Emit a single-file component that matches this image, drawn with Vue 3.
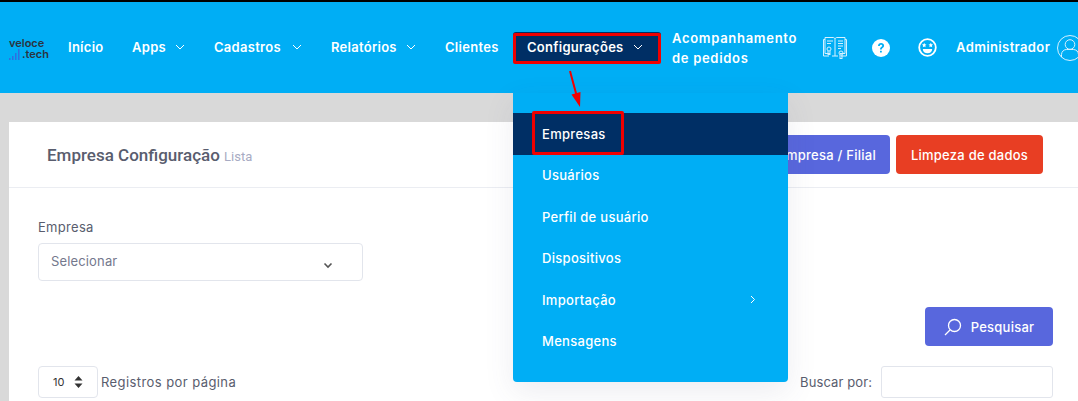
<template>
  <div class="page">
    <header class="topbar">
      <div class="logo">
        <svg class="logo-bars" width="13" height="11" viewBox="0 0 13 11">
          <rect x="0" y="9" width="1.5" height="2" fill="#2f6fe0" />
          <rect x="3" y="7" width="1.5" height="4" fill="#2f6fe0" />
          <rect x="6" y="4" width="1.5" height="7" fill="#2f6fe0" />
          <rect x="9" y="0" width="1.5" height="11" fill="#2f6fe0" />
        </svg>
        <span class="logo-a">veloce</span>
        <span class="logo-b">.tech</span>
      </div>

      <nav class="nav">
        <a class="nav-item inicio">Início</a>
        <a class="nav-item apps">Apps<svg class="chev" viewBox="0 0 10 6"><path d="M1 1l4 4 4-4" /></svg></a>
        <a class="nav-item cad">Cadastros<svg class="chev" viewBox="0 0 10 6"><path d="M1 1l4 4 4-4" /></svg></a>
        <a class="nav-item rel">Relatórios<svg class="chev" viewBox="0 0 10 6"><path d="M1 1l4 4 4-4" /></svg></a>
        <a class="nav-item cli">Clientes</a>
        <a class="nav-item conf">Configurações<svg class="chev" viewBox="0 0 10 6"><path d="M1 1l4 4 4-4" /></svg></a>
        <a class="nav-item acomp">Acompanhamento<br />de pedidos</a>
      </nav>

      <div class="tools">
        <svg class="book" width="26" height="24" viewBox="0 0 26 24" fill="none" stroke="#d6f1ff" stroke-width="1">
          <path d="M7 20H1.500V3.500H3M19 20h5.500V3.500H23" />
          <path d="M3 1.500h8c1 0 2 .5 2 1.500 0-1 1-1.500 2-1.500h8v16h-5M8 17.500H3v-16M13 3v17M10 20h6" />
          <path d="M5 5h6M5 7.500h4M16 5h5M16 7.500h5M16 10h5M16 12.500h3" />
          <circle cx="7" cy="13" r="2" />
          <path d="M6 15v4l1-1 1 1v-4" />
          <circle cx="19" cy="17" r="2" />
          <path d="M18 19v4l1-1 1 1v-4" />
        </svg>
        <svg class="help" width="18" height="18" viewBox="0 0 18 18">
          <circle cx="9" cy="9" r="9" fill="#fff" />
          <path d="M6 7c0-2 1.300-3 3.100-3 1.700 0 3 1 3 2.700 0 2.200-2.400 2.200-2.400 3.800H8c0-2.600 2.200-2.600 2.200-3.800 0-.6-.5-1-1.100-1-.7 0-1.200.5-1.300 1.300z" fill="#00aef5" />
          <rect x="8" y="11.700" width="1.800" height="1.900" rx=".4" fill="#00aef5" />
        </svg>
        <svg class="smile" width="19" height="19" viewBox="0 0 19 19">
          <circle cx="9.500" cy="9.500" r="8.300" fill="none" stroke="#fff" stroke-width="1.800" />
          <path d="M6.200 4.800l.7 1.500 1.600.2-1.200 1.100.3 1.600-1.400-.8-1.400.8.300-1.600-1.200-1.100 1.600-.2zM12.800 4.800l.7 1.500 1.600.2-1.200 1.100.3 1.600-1.400-.8-1.400.8.300-1.600-1.200-1.100 1.600-.2z" fill="#fff" />
          <path d="M4.800 11h9.400c0 2.700-2 4.300-4.700 4.300S4.800 13.700 4.800 11z" fill="#fff" />
        </svg>
        <span class="admin">Administrador</span>
        <svg class="user" width="26" height="26" viewBox="0 0 26 26" fill="none" stroke="#d6f1ff" stroke-width="1">
          <circle cx="13" cy="13" r="12.500" />
          <circle cx="13" cy="9.500" r="4.800" />
          <path d="M4.500 22v-2.500c0-3 2.500-5 5-5h7c2.500 0 5 2 5 5V22" />
        </svg>
      </div>
    </header>

    <main class="card">
      <div class="card-head">
        <h3 class="title">Empresa Configuração <small>Lista</small></h3>
        <div class="head-actions">
          <button class="btn btn-blue">Empresa / Filial</button>
          <button class="btn btn-red">Limpeza de dados</button>
        </div>
      </div>

      <div class="card-body">
        <label class="field-label">Empresa</label>
        <div class="select">
          <span>Selecionar</span>
          <svg width="10" height="7" viewBox="0 0 10 7"><path d="M1.500 1.500L5 5l3.500-3.500" fill="none" stroke="#555" stroke-width="1.600" /></svg>
        </div>

        <div class="search-row">
          <button class="btn btn-blue btn-search">
            <svg width="18" height="18" viewBox="0 0 18 18" fill="none" stroke="#fff" stroke-width="1.300">
              <circle cx="10.500" cy="7.500" r="6" />
              <path d="M6 12l-5 5" />
            </svg>
            Pesquisar
          </button>
        </div>

        <div class="table-tools">
          <div class="per-page">
            <div class="page-size">
              <span>10</span>
              <svg width="9" height="12" viewBox="0 0 9 12"><path d="M4.500 0L8.500 4.500H.5zM4.500 12L.5 7.500H8.500z" fill="#333" /></svg>
            </div>
            <span class="muted">Registros por página</span>
          </div>
          <div class="find">
            <span class="muted">Buscar por:</span>
            <div class="find-input"></div>
          </div>
        </div>
      </div>
    </main>

    <div class="dropdown">
      <a v-for="item in menu" :key="item" class="drop-item" :class="{ active: item === 'Empresas' }">
        {{ item }}
        <svg v-if="item === 'Importação'" width="6" height="9" viewBox="0 0 6 9"><path d="M1 1l3.500 3.500L1 8" fill="none" stroke="#fff" stroke-width="1" /></svg>
      </a>
    </div>

    <!-- marcações vermelhas -->
    <div class="mark mark-conf"></div>
    <div class="mark mark-emp"></div>
    <svg class="arrow" width="16" height="38" viewBox="0 0 16 38">
      <path d="M2 1l7 26" stroke="#f00000" stroke-width="2" fill="none" />
      <path d="M3.500 24.500l9-2.500-.5 15z" fill="#f00000" />
    </svg>
  </div>
</template>

<script setup>
const menu = ['Empresas', 'Usuários', 'Perfil de usuário', 'Dispositivos', 'Importação', 'Mensagens']
</script>

<style>
html,
body {
  margin: 0;
  overflow: hidden;
}
</style>

<style scoped>
.page {
  position: relative;
  width: 1078px;
  height: 401px;
  overflow: hidden;
  background: #d9d9d9;
  font-family: Inter, "Liberation Sans", sans-serif;
  color: #595d6e;
}

.topbar {
  display: flex;
  align-items: center;
  height: 91px;
  background: #00aef5;
  border-top: 2px solid #000;
  padding-left: 9px;
  overflow: hidden;
}

.logo {
  position: relative;
  width: 40px;
  height: 22px;
  flex: none;
  color: #2b3440;
  font-size: 11px;
  font-weight: 600;
  line-height: 11px;
  margin-top: 3px;
}

.logo-a {
  display: block;
}

.logo-b {
  display: block;
  margin-left: 13px;
}

.logo-bars {
  position: absolute;
  left: 0;
  top: 11px;
}

.nav {
  display: flex;
  align-items: center;
  margin-left: 19px;
  color: #fff;
  font-size: 13px;
  font-weight: 600;
  letter-spacing: 0.280px;
}

.nav-item {
  display: flex;
  align-items: center;
  box-sizing: border-box;
  height: 31px;
  padding-bottom: 1px;
  white-space: nowrap;
}

.inicio { width: 64px; }
.apps { width: 82px; }
.cad { width: 117px; }
.rel { width: 114px; }
.cli { width: 68px; }

.chev {
  width: 10px;
  height: 6px;
  margin-left: auto;
  margin-right: 29px;
  fill: none;
  stroke: #fff;
  stroke-width: 1;
}

.conf {
  width: 148px;
  padding-left: 14px;
  background: #002f65;
  border-radius: 3px;
  margin-right: 11px;
}

.conf .chev {
  margin-right: 18px;
}

.acomp {
  display: block;
  width: 150px;
  height: auto;
  padding: 0;
  line-height: 20px;
  letter-spacing: 0.700px;
}

.tools {
  display: flex;
  align-items: center;
  color: #fff;
  font-size: 13px;
  font-weight: 600;
  letter-spacing: 0.380px;
}

.book { flex: none; }
.help { margin-left: 24px; flex: none; }
.smile { margin-left: 28px; flex: none; }
.admin { margin: -2px 0 0 19px; white-space: nowrap; }
.user { margin-left: 7px; flex: none; }

.card {
  margin: 29px 0 0 9px;
  background: #fff;
  height: 279px;
}

.card-head {
  display: flex;
  align-items: center;
  justify-content: space-between;
  height: 65px;
  padding: 0 35px 0 38px;
  border-bottom: 1px solid #ebedf2;
}

.title {
  margin: 0;
  font-family: Roboto, sans-serif;
  font-size: 17px;
  font-weight: 500;
  color: #595d6e;
}

.title small {
  font-size: 13px;
  font-weight: 400;
  color: #a7abc3;
}

.head-actions {
  display: flex;
  gap: 6px;
}

.btn {
  display: flex;
  align-items: center;
  justify-content: center;
  height: 39px;
  padding: 0 14px;
  border: none;
  border-radius: 4px;
  font-family: inherit;
  font-size: 13px;
  font-weight: 500;
  letter-spacing: 0.250px;
  color: #fff;
}

.btn-blue {
  background: #5867dd;
}

.btn-red {
  width: 147px;
  background: #e83e23;
}

.card-body {
  padding: 31px 25px 0 29px;
}

.field-label {
  display: block;
  font-size: 13px;
  line-height: 16px;
  letter-spacing: 0.300px;
  color: #595d6e;
}

.select {
  display: flex;
  align-items: center;
  justify-content: space-between;
  box-sizing: border-box;
  width: 325px;
  height: 38px;
  margin-top: 8px;
  padding: 0 29px 2px 12px;
  border: 1px solid #e2e5ec;
  border-radius: 4px;
  font-size: 13px;
  letter-spacing: 0.150px;
  color: #74788d;
}

.select svg {
  margin-top: 8px;
}

.search-row {
  display: flex;
  justify-content: flex-end;
  margin-top: 26px;
}

.btn-search {
  width: 128px;
  gap: 9px;
  padding: 0;
}

.table-tools {
  display: flex;
  justify-content: space-between;
  margin-top: 20px;
}

.per-page,
.find {
  display: flex;
  align-items: center;
}

.muted {
  font-size: 13px;
  letter-spacing: 0.100px;
  color: #595d6e;
}

.per-page .muted {
  letter-spacing: 0.420px;
}

.page-size {
  display: flex;
  align-items: center;
  justify-content: space-between;
  box-sizing: border-box;
  width: 60px;
  height: 32px;
  margin-right: 3px;
  padding: 0 14px 0 14px;
  border: 1px solid #e2e5ec;
  border-radius: 4px;
  font-size: 11px;
  color: #333;
}

.find-input {
  box-sizing: border-box;
  width: 172px;
  height: 32px;
  margin-left: 9px;
  border: 1px solid #e2e5ec;
  border-radius: 3px;
}

.dropdown {
  position: absolute;
  left: 513px;
  top: 93px;
  box-sizing: border-box;
  width: 275px;
  height: 289px;
  padding-top: 20px;
  background: #00aef5;
  border-radius: 0 0 4px 4px;
  box-shadow: 0 10px 30px rgba(80, 80, 120, 0.1);
}

.drop-item {
  display: flex;
  align-items: center;
  justify-content: space-between;
  height: 41.500px;
  padding: 0 32px 0 29px;
  font-size: 13px;
  font-weight: 500;
  letter-spacing: 0.300px;
  color: #fff;
}

.active {
  background: #002f65;
}

.mark {
  position: absolute;
  box-sizing: border-box;
  border: 3px solid #f00000;
  border-radius: 2px;
}

.mark-conf {
  left: 513px;
  top: 33px;
  width: 148px;
  height: 31px;
}

.mark-emp {
  left: 532px;
  top: 111px;
  width: 92px;
  height: 44px;
}

.arrow {
  position: absolute;
  left: 568px;
  top: 70px;
}
</style>
